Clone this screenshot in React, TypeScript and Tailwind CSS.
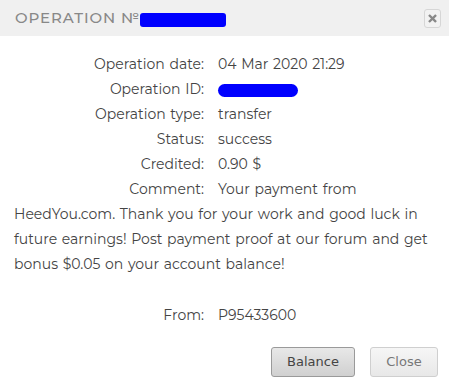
const rows: [string, string | null][] = [
  ['Operation date:', '04 Mar 2020 21:29'],
  ['Operation ID:', null],
  ['Operation type:', 'transfer'],
  ['Status:', 'success'],
  ['Credited:', '0.90 $'],
];

export default function App() {
  return (
    <div className="w-[449px] h-[387px] bg-white overflow-hidden text-[#444] text-[14px]" style={{ fontFamily: '"Montserrat", "Lato", "Noto Sans", sans-serif' }}>
      {/* header */}
      <div className="h-[36px] bg-[#f0f0f0] flex items-center justify-between pl-[15px] pr-[8px]">
        <div className="flex items-center text-[#888] text-[15px] tracking-[0.06em] font-medium pt-[1px]">
          <span>OPERATION №</span>
          <span className="inline-block w-[86px] h-[14px] bg-[#0000ff] rounded-[3px] mt-[2px]" />
        </div>
        <button className="w-[17px] h-[19px] rounded-[3px] border border-[#d6d6d6] bg-[#f2f2f2] flex items-center justify-center">
          <svg width="9" height="9" viewBox="0 0 10 10">
            <path d="M2 2 L8 8 M8 2 L2 8" stroke="#888" strokeWidth="2.6" strokeLinecap="square" />
          </svg>
        </button>
      </div>

      <div className="px-[14px] pt-[16px] leading-[25px] [word-spacing:1px]">
        {rows.map(([label, value]) => (
          <div key={label}>
            <span className="inline-block w-[190px] text-right mr-[14px]">{label}</span>
            {value ?? <span className="inline-block align-middle w-[80px] h-[13px] bg-[#0000ff] rounded-full" />}
          </div>
        ))}
        <div>
          <span className="inline-block w-[190px] text-right mr-[14px]">Comment:</span>
          Your payment from HeedYou.com. Thank you for your work and good luck in future earnings! Post payment proof at our forum and get bonus $0.05 on your account balance!
        </div>
        <div className="mt-[26px]">
          <span className="inline-block w-[190px] text-right mr-[14px]">From:</span>
          P95433600
        </div>
      </div>

      <div className="flex justify-end gap-[15px] pr-[11px] mt-[19px]" style={{ fontFamily: '"DejaVu Sans", Verdana, sans-serif' }}>
        <button className="w-[84px] h-[30px] rounded-[3px] border border-[#9a9a9a] bg-gradient-to-b from-[#e8e8e8] to-[#d0d0d0] text-[#444] text-[13px]">Balance</button>
        <button className="w-[68px] h-[30px] rounded-[3px] border border-[#cfcfcf] bg-gradient-to-b from-[#f6f6f6] to-[#e8e8e8] text-[#777] text-[13px]">Close</button>
      </div>
    </div>
  );
}
